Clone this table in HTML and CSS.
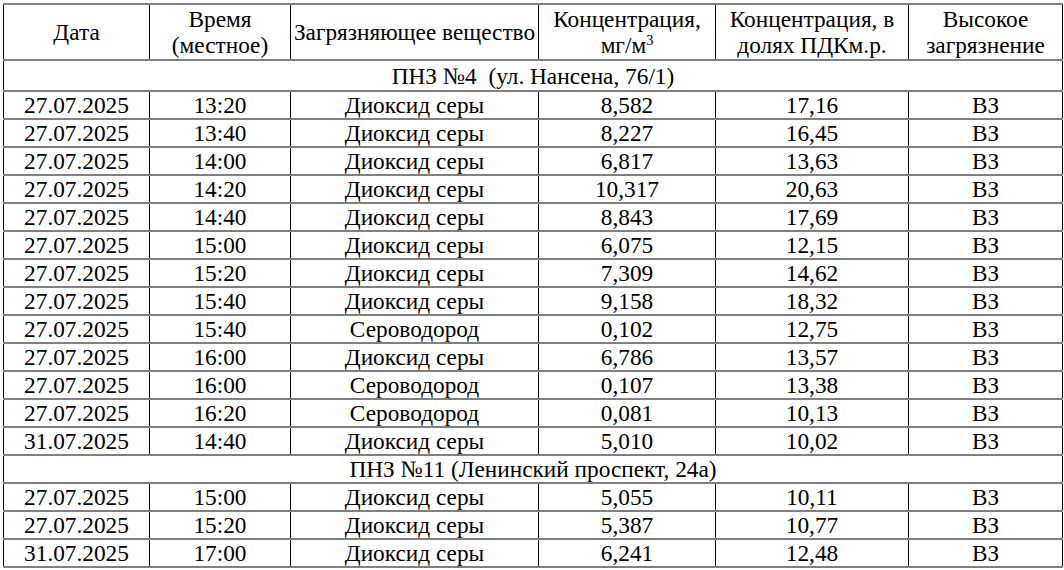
FILE: index.html
```html
<!DOCTYPE html>
<html lang="ru">
<head>
<meta charset="utf-8">
<link rel="stylesheet" href="styles.css">
</head>
<body>
<table class="data">
  <colgroup>
    <col class="c1"><col class="c2"><col class="c3"><col class="c4"><col class="c5"><col class="c6">
  </colgroup>
  <thead>
    <tr class="head">
      <th>Дата</th>
      <th>Время<br>(местное)</th>
      <th>Загрязняющее вещество</th>
      <th>Концентрация,<br>мг/м<sup>3</sup></th>
      <th>Концентрация, в<br>долях ПДКм.р.</th>
      <th>Высокое<br>загрязнение</th>
    </tr>
  </thead>
  <tbody>
    <tr class="section first"><td colspan="6">ПНЗ №4&nbsp; (ул. Нансена, 76/1)</td></tr>
    <tr><td>27.07.2025</td><td>13:20</td><td>Диоксид серы</td><td>8,582</td><td>17,16</td><td>ВЗ</td></tr>
    <tr><td>27.07.2025</td><td>13:40</td><td>Диоксид серы</td><td>8,227</td><td>16,45</td><td>ВЗ</td></tr>
    <tr><td>27.07.2025</td><td>14:00</td><td>Диоксид серы</td><td>6,817</td><td>13,63</td><td>ВЗ</td></tr>
    <tr><td>27.07.2025</td><td>14:20</td><td>Диоксид серы</td><td>10,317</td><td>20,63</td><td>ВЗ</td></tr>
    <tr><td>27.07.2025</td><td>14:40</td><td>Диоксид серы</td><td>8,843</td><td>17,69</td><td>ВЗ</td></tr>
    <tr><td>27.07.2025</td><td>15:00</td><td>Диоксид серы</td><td>6,075</td><td>12,15</td><td>ВЗ</td></tr>
    <tr><td>27.07.2025</td><td>15:20</td><td>Диоксид серы</td><td>7,309</td><td>14,62</td><td>ВЗ</td></tr>
    <tr><td>27.07.2025</td><td>15:40</td><td>Диоксид серы</td><td>9,158</td><td>18,32</td><td>ВЗ</td></tr>
    <tr><td>27.07.2025</td><td>15:40</td><td>Сероводород</td><td>0,102</td><td>12,75</td><td>ВЗ</td></tr>
    <tr><td>27.07.2025</td><td>16:00</td><td>Диоксид серы</td><td>6,786</td><td>13,57</td><td>ВЗ</td></tr>
    <tr><td>27.07.2025</td><td>16:00</td><td>Сероводород</td><td>0,107</td><td>13,38</td><td>ВЗ</td></tr>
    <tr><td>27.07.2025</td><td>16:20</td><td>Сероводород</td><td>0,081</td><td>10,13</td><td>ВЗ</td></tr>
    <tr><td>31.07.2025</td><td>14:40</td><td>Диоксид серы</td><td>5,010</td><td>10,02</td><td>ВЗ</td></tr>
    <tr class="section"><td colspan="6">ПНЗ №11 (Ленинский проспект, 24а)</td></tr>
    <tr><td>27.07.2025</td><td>15:00</td><td>Диоксид серы</td><td>5,055</td><td>10,11</td><td>ВЗ</td></tr>
    <tr><td>27.07.2025</td><td>15:20</td><td>Диоксид серы</td><td>5,387</td><td>10,77</td><td>ВЗ</td></tr>
    <tr><td>31.07.2025</td><td>17:00</td><td>Диоксид серы</td><td>6,241</td><td>12,48</td><td>ВЗ</td></tr>
  </tbody>
</table>
</body>
</html>
```

FILE: styles.css
```css
html, body {
  margin: 0;
  padding: 0;
  background: #ffffff;
}
body {
  padding: 3px 0 0 3px;
  font-family: "Liberation Serif", serif;
  font-size: 23.3px;
  color: #000000;
}
.data {
  border-collapse: collapse;
  table-layout: fixed;
  width: 1059px;
}
.c1 { width: 146px; }
.c2 { width: 141px; }
.c3 { width: 248px; }
.c4 { width: 177px; }
.c5 { width: 193px; }
.c6 { width: 154px; }
.data th,
.data td {
  font-family: "Liberation Serif", serif;
  font-size: 23.3px;
  border-left: 1px solid #000000;
  border-right: 1px solid #000000;
  border-top: 2px solid #808080;
  border-bottom: 2px solid #808080;
  padding: 0;
  text-align: center;
  vertical-align: middle;
  font-weight: normal;
  line-height: 26px;
  white-space: nowrap;
  overflow: hidden;
}
.data tr { height: 28px; }
.data tr.head { height: 56px; }
.data tr.section.first { height: 31px; }
.data sup {
  font-size: 0.62em;
  line-height: 0;
  vertical-align: 0.55em;
}
```
